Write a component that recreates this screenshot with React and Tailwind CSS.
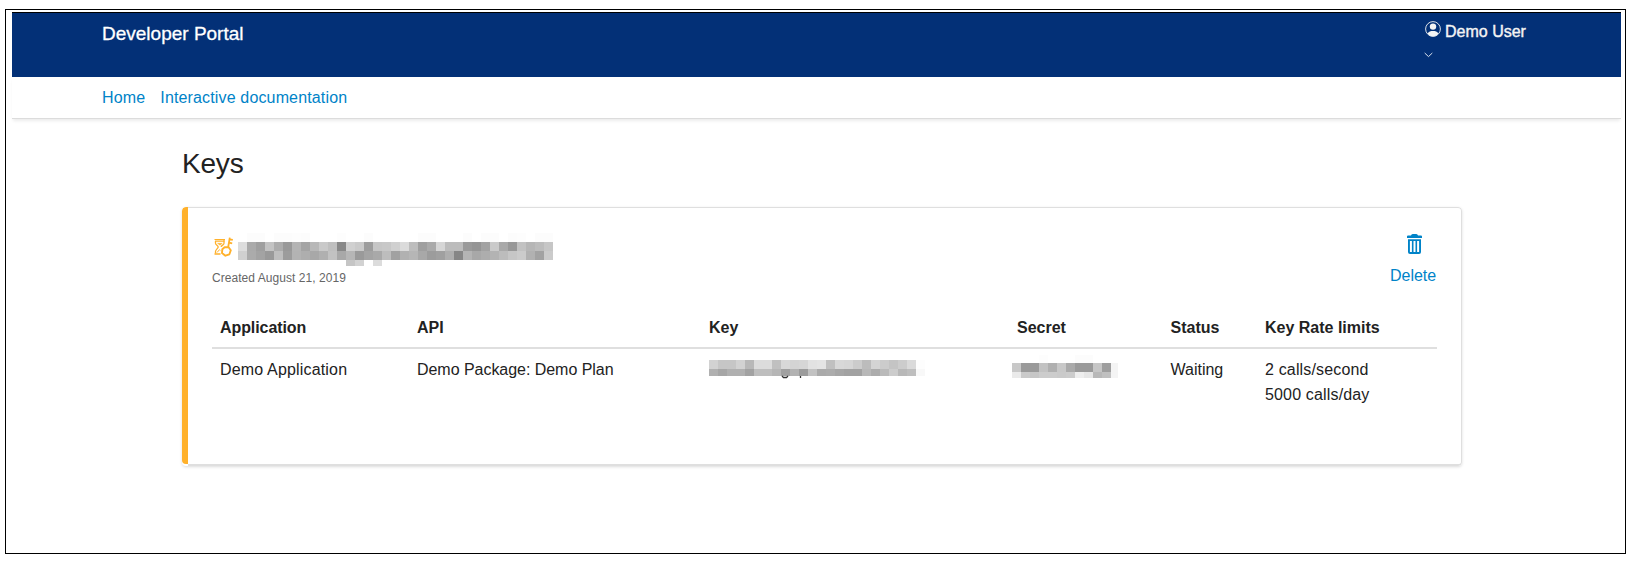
import React from "react";

const NAME_ROWS = [
  { y: 0, h: 9, cells: "- fc fc - fc fc fd fc - - - fd - - fc - - - - - fc fc - - - fc - fc fc - fc fd - fc fc" },
  { y: 9, h: 9, cells: "dd aa 9f c3 ac 99 b4 a4 b8 c9 bf 88 d0 ca 9d c6 c8 d0 db bd 9f aa d6 bc bc 9a 95 a2 ca a9 98 c2 b6 bc c6" },
  { y: 18, h: 9, cells: "d0 ab a3 99 be 9c b3 ae a8 b0 c2 a8 b6 9a a4 a9 bd a1 b1 b6 a8 9c a0 ae 86 b4 a8 ad b3 bc c6 cb b1 a2 cb" },
  { y: 27, h: 6, cells: "- - - - - - - - - - - - c5 d2 - dc" },
];
const KEY_ROWS = [
  { y: 0, h: 9, cells: "d2 c6 c6 d2 b8 dc dc c0 d8 d4 d6 e2 e4 c0 d8 d6 cc bc d4 cc c4 cc da fd" },
  { y: 9, h: 7, cells: "b0 a6 b0 b0 a2 be be b6 a0 b2 9c c2 aa ac a6 a2 a2 b8 ac ba cc b8 be f8" },
];
const SECRET_ROWS = [
  { y: 0, h: 8, cells: "- - - fd - - - fc fc" },
  { y: 8, h: 9, cells: "c8 9a 9a c2 b0 c8 aa 9a 9a c6 9e f4" },
  { y: 17, h: 6, cells: "ea ca c6 cc cc ca cc ee e6 b8 c0 f4" },
];

function Mosaic({ rows, width, height, children }) {
  return (
    <svg width={width} height={height} shapeRendering="crispEdges" className="block shrink-0" aria-hidden="true">
      {rows.map((row) =>
        row.cells.split(" ").map((c, i) =>
          c === "-" ? null : <rect key={`${row.y}-${i}`} x={i * 9} y={row.y} width="9" height={row.h} fill={`#${c}${c}${c}`} />
        )
      )}
      {children}
    </svg>
  );
}

function UserIcon() {
  return (
    <svg width="16" height="16" viewBox="0 0 16 16" className="block" aria-hidden="true">
      <circle cx="8" cy="8" r="7.4" fill="none" stroke="#f4f4f4" strokeWidth="0.9" />
      <circle cx="8" cy="5.6" r="3.2" fill="#f4f4f4" />
      <path d="M2.6 12.4C3.8 10.6 5.6 10 8 10s4.2.6 5.4 2.4C12 14.400 10.200 15.200 8 15.200s-4-.8-5.400-2.800z" fill="#f4f4f4" />
    </svg>
  );
}

function PendingKeyIcon() {
  return (
    <svg width="19" height="20" viewBox="0 0 19 20" className="block" fill="none" stroke="#ffb12b" aria-hidden="true">
      <path d="M.5 2.500H11M1 4.200H10.500" strokeWidth="1.200" />
      <path d="M1.500 4v2.200c0 1.700 2.700 2.400 2.700 3.800S1.500 12.600 1.500 14.500v2M10 3v3.200c0 1.700-2.500 2-2.900 3.600" strokeWidth="1.300" />
      <path d="M3.500 6.300h4.800L6 8.200z" fill="#ffb12b" strokeWidth=".4" />
      <path d="M3 15.500l2.500-2.800.9.800" strokeWidth="1" />
      <path d="M.5 17H6.500" strokeWidth="1.400" />
      <path d="M10.600 10.200l4 .1 2.200 3-1.400 4-4 1.400-3.400-2.600.3-3.900z" strokeWidth="1.900" strokeLinejoin="round" />
      <path d="M14.200 10L15.800.6M15.500 2.300l3.300.6M15 5.700l3.200.6" strokeWidth="1.800" />
    </svg>
  );
}

function TrashIcon() {
  return (
    <svg width="15" height="20" viewBox="0 0 15 20" className="block" aria-hidden="true">
      <path d="M4 1.600Q4.300 0 5.700 0h3.600Q10.700 0 11 1.600h3q1 0 1 1V4H0V2.600q0-1 1-1z" fill="#0083c8" />
      <path d="M1 5.200h13V18q0 2-2 2H3q-2 0-2-2z" fill="#0083c8" />
      <path d="M3.900 7v11M7.500 7v11M11.100 7v11" stroke="#fff" strokeWidth="2" />
    </svg>
  );
}

const GRID = "grid grid-cols-[197px_292px_308px_153.5px_94.5px_1fr]";

export default function App() {
  return (
    <div className="h-[574px] w-[1650px] overflow-hidden bg-white pl-[5px] pt-[9px] font-['Liberation_Sans',Arial,sans-serif] text-base leading-[25px] text-[#222]">
      <div className="h-[545px] w-[1621px] border border-black pl-[6px] pt-[2px]">
        <header className="flex h-[65px] w-[1609px] justify-between border-t border-black bg-[#033077] pl-[90px] text-white">
          <div className="pt-[8px] text-[19px] leading-[25px] [-webkit-text-stroke:0.3px_white]">Developer Portal</div>
          <div className="w-[196px] pt-[6px]">
            <div className="flex">
              <div className="mr-[4px] pt-[2px]"><UserIcon /></div>
              <span className="text-[#f4f4f4] [-webkit-text-stroke:0.4px_#f4f4f4]">Demo User</span>
            </div>
            <svg width="9" height="6" viewBox="0 0 9 6" className="mt-[8px] -ml-px block" fill="none" stroke="#dce3ee" aria-hidden="true">
              <path d="M.7 1L4.500 4.600 8.300 1" strokeWidth="1" />
            </svg>
          </div>
        </header>
        <nav className="flex h-[42px] w-[1609px] gap-[15px] border-b border-[#dcdcdc] pl-[90px] pt-[8px] text-[#0083c8] shadow-[0_3px_3px_-1px_rgba(0,0,0,0.08)]">
          <a className="tracking-[0.15px]">Home</a>
          <a className="tracking-[0.15px]">Interactive documentation</a>
        </nav>
        <main className="w-[1450px] pl-[170px] pt-[27px]">
          <h1 className="h-[61px] text-[28px] leading-[35px] tracking-[-0.2px]">Keys</h1>
          <section className="flex h-[259px] w-[1280px] overflow-hidden rounded-[4px] shadow-[0_1px_3px_rgba(0,0,0,0.14)]">
            <div className="mb-[2px] w-[6px] shrink-0 rounded-l-[4px] bg-[#ffb12b]" />
            <div className="w-[1274px] rounded-r-[4px] border-t border-r border-b-2 border-[#dfdfdf] bg-white pl-[24px] pr-[24px] pt-[25px]">
              <div className="flex h-[82px] justify-between">
                <div>
                  <div className="flex h-[33px]">
                    <div className="w-[26px] pl-[2px] pt-[4px]"><PendingKeyIcon /></div>
                    <Mosaic rows={NAME_ROWS} width={315} height={33} />
                  </div>
                  <div className="h-[20px] text-xs leading-[24px] tracking-[0.05px] text-[#666]">Created August 21, 2019</div>
                </div>
                <div className="flex flex-col items-center pr-[1px] text-[#0083c8]">
                  <div className="pl-[3px] pt-[1px]"><TrashIcon /></div>
                  <a className="mt-[9px] tracking-[-0.05px]">Delete</a>
                </div>
              </div>
              <div className={`${GRID} h-[34px] border-b-2 border-[#dfdfdf] font-bold`}>
                <div className="pl-2 tracking-[-0.08px]">Application</div>
                <div className="pl-2">API</div>
                <div className="pl-2">Key</div>
                <div className="pl-2">Secret</div>
                <div className="pl-2">Status</div>
                <div className="pl-2">Key Rate limits</div>
              </div>
              <div className={`${GRID} pt-2`}>
                <div className="pl-2 tracking-[0.17px]">Demo Application</div>
                <div className="pl-2 tracking-[-0.04px]">Demo Package: Demo Plan</div>
                <div className="pl-2 pt-[3px]">
                  <Mosaic rows={KEY_ROWS} width={216} height={19}>
                    <path d="M73 16l1.500 1.500h3L79 16M91.500 16v2" fill="none" stroke="#333" strokeWidth="1.300" shapeRendering="auto" />
                  </Mosaic>
                </div>
                <div className="pl-[3px]">
                  <div className="-mt-[2px]"><Mosaic rows={SECRET_ROWS} width={106} height={23} /></div>
                </div>
                <div className="pl-2">Waiting</div>
                <div className="pl-2 tracking-[0.16px]">
                  <div>2 calls/second</div>
                  <div>5000 calls/day</div>
                </div>
              </div>
            </div>
          </section>
        </main>
      </div>
    </div>
  );
}
